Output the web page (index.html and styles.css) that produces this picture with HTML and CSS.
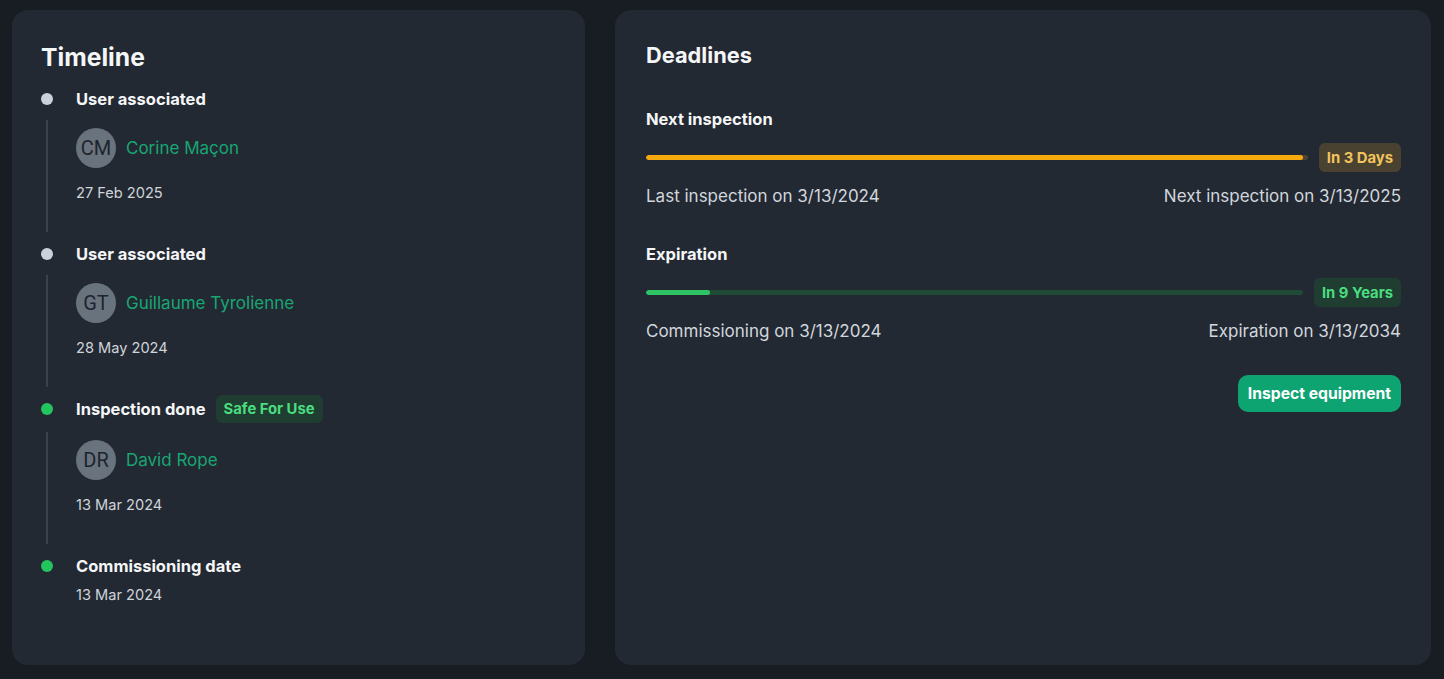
FILE: index.html
```html
<!DOCTYPE html>
<html lang="en">
<head>
    <meta charset="UTF-8">
    <meta name="viewport" content="width=device-width, initial-scale=1.0">
    <link rel="stylesheet" href="styles.css">
    <title>Equipment</title>
</head>
<body>
    <div class="layout">
        <section class="card timeline-card">
            <h2 class="timeline-title">Timeline</h2>

            <div class="timeline">
                <div class="event">
                    <div class="event-head">
                        <span class="dot"></span>
                        <span class="event-label">User associated</span>
                    </div>
                    <div class="event-body">
                        <div class="user">
                            <span class="avatar">CM</span>
                            <span class="user-name">Corine Maçon</span>
                        </div>
                        <div class="event-date">27 Feb 2025</div>
                    </div>
                </div>

                <div class="event">
                    <div class="event-head">
                        <span class="dot"></span>
                        <span class="event-label">User associated</span>
                    </div>
                    <div class="event-body">
                        <div class="user">
                            <span class="avatar">GT</span>
                            <span class="user-name">Guillaume Tyrolienne</span>
                        </div>
                        <div class="event-date">28 May 2024</div>
                    </div>
                </div>

                <div class="event">
                    <div class="event-head with-chip">
                        <span class="dot green"></span>
                        <span class="event-label">Inspection done</span>
                        <span class="chip chip-green">Safe For Use</span>
                    </div>
                    <div class="event-body">
                        <div class="user">
                            <span class="avatar">DR</span>
                            <span class="user-name">David Rope</span>
                        </div>
                        <div class="event-date">13 Mar 2024</div>
                    </div>
                </div>

                <div class="event last">
                    <div class="event-head">
                        <span class="dot green"></span>
                        <span class="event-label">Commissioning date</span>
                    </div>
                    <div class="event-date">13 Mar 2024</div>
                </div>
            </div>
        </section>

        <section class="card deadlines-card">
            <h2 class="deadlines-title">Deadlines</h2>

            <div class="deadline">
                <div class="deadline-label">Next inspection</div>
                <div class="progress-row">
                    <div class="track track-orange">
                        <div class="fill fill-orange" style="width: 99.3%"></div>
                    </div>
                    <span class="chip chip-orange">In 3 Days</span>
                </div>
                <div class="deadline-dates">
                    <span>Last inspection on 3/13/2024</span>
                    <span>Next inspection on 3/13/2025</span>
                </div>
            </div>

            <div class="deadline">
                <div class="deadline-label">Expiration</div>
                <div class="progress-row">
                    <div class="track track-green">
                        <div class="fill fill-green" style="width: 9.8%"></div>
                    </div>
                    <span class="chip chip-green">In 9 Years</span>
                </div>
                <div class="deadline-dates">
                    <span>Commissioning on 3/13/2024</span>
                    <span>Expiration on 3/13/2034</span>
                </div>
            </div>

            <div class="actions">
                <button class="btn-primary" type="button">Inspect equipment</button>
            </div>
        </section>
    </div>
</body>
</html>
```

FILE: styles.css
```css
body {
    font-family: Inter, "Noto Sans", sans-serif;
    background-color: #181c23;
    color: #d1d6dd;
    margin: 0;
    padding: 0;
}

.layout {
    display: grid;
    grid-template-columns: 573px 1fr;
    gap: 30px;
    padding: 10px 13px 14px 12px;
    height: 679px;
    box-sizing: border-box;
}

.card {
    background-color: #232932;
    border-radius: 16px;
}

/* Timeline */

.timeline-card {
    padding: 33px 29px 0 29px;
}

.timeline-title {
    margin: 0 0 15px;
    font-size: 24.7px;
    line-height: 29px;
    font-weight: 700;
    color: #f5f6f8;
}

.event-head {
    display: flex;
    align-items: center;
    height: 24px;
}

.event-head.with-chip {
    height: 28px;
    margin: -2px 0 1px;
}

.dot {
    width: 12px;
    height: 12px;
    border-radius: 50%;
    background-color: #cbd1d9;
    margin-right: 23px;
    flex-shrink: 0;
}

.dot.green {
    background-color: #22c55e;
}

.event-label {
    font-size: 16.5px;
    font-weight: 700;
    line-height: 24px;
    color: #f5f6f8;
}

.event-body {
    margin: 9px 0 10px 5px;
    border-left: 2px solid #3a424c;
    padding: 8px 0 29px 28px;
}

.user {
    display: flex;
    align-items: center;
    gap: 10px;
}

.avatar {
    width: 40px;
    height: 40px;
    border-radius: 50%;
    background-color: #69737d;
    color: #1d242d;
    font-family: Roboto, "Liberation Sans", sans-serif;
    font-size: 20px;
    display: flex;
    align-items: center;
    justify-content: center;
}

.user-name {
    font-size: 17px;
    color: #17a673;
}

.event-date {
    margin-top: 15px;
    font-size: 14.6px;
    line-height: 20px;
    color: #cfd4db;
}

.event.last {
    margin-top: 1px;
}

.event.last .event-date {
    margin: 7px 0 0 35px;
}

.chip {
    display: inline-flex;
    align-items: center;
    height: 29px;
    padding: 0 8px;
    border-radius: 6px;
    font-size: 14.8px;
    font-weight: 700;
    box-sizing: border-box;
}

.chip-green {
    background-color: #1f3d31;
    color: #4ade80;
}

.chip-orange {
    background-color: #4a4231;
    color: #f2c55c;
}

.event-head .chip {
    margin-left: 10px;
    height: 28px;
}

/* Deadlines */

.deadlines-card {
    padding: 33px 30px 0 31px;
}

.deadlines-title {
    margin: 0 0 40px;
    font-size: 21.8px;
    line-height: 24px;
    font-weight: 700;
    color: #f5f6f8;
}

.deadline {
    margin-bottom: 34px;
}

.deadline-label {
    font-size: 16.5px;
    font-weight: 700;
    line-height: 24px;
    color: #f5f6f8;
}

.progress-row {
    display: flex;
    align-items: center;
    gap: 11px;
    margin-top: 12px;
}

.track {
    flex: 1;
    height: 5px;
    border-radius: 3px;
    overflow: hidden;
}

.track-orange {
    background-color: #4d4535;
}

.track-green {
    background-color: #1f4a36;
}

.fill {
    height: 100%;
    border-radius: 3px;
}

.fill-orange {
    background-color: #f5a90c;
}

.fill-green {
    background-color: #2ec465;
}

.deadline-dates {
    display: flex;
    justify-content: space-between;
    margin-top: 12px;
    font-size: 17px;
    line-height: 24px;
    color: #d1d6dd;
}

.actions {
    display: flex;
    justify-content: flex-end;
    margin-top: -2px;
}

.btn-primary {
    font-family: inherit;
    background-color: #0ea472;
    color: #fff;
    font-size: 15.7px;
    font-weight: 700;
    height: 37px;
    padding: 0 10px;
    border: none;
    border-radius: 10px;
    cursor: pointer;
}
```
